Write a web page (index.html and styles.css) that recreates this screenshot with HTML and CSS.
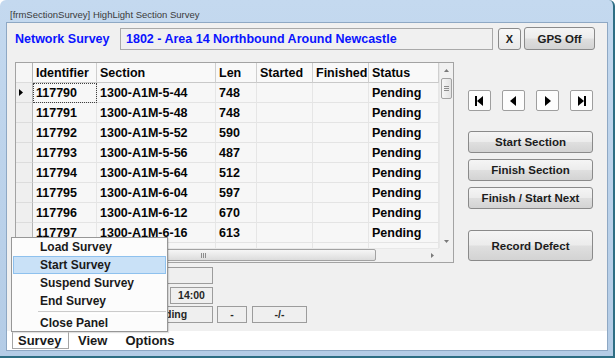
FILE: index.html
```html
<html lang="en">
  <head>
    <meta charset="UTF-8" />
    <title>HighLight Section Survey</title>
    <link rel="stylesheet" href="styles.css">
  </head>
  <body>
    <div class="window">
      <div class="titlebar">[frmSectionSurvey] HighLight Section Survey</div>
      <div class="client">
        <div class="top-row">
          <div class="net-label">Network Survey</div>
          <div class="net-box">1802 - Area 14 Northbound Around Newcastle</div>
          <button class="btn x-btn">X</button>
          <button class="btn gps-btn">GPS Off</button>
        </div>

        <div class="main">
          <div class="grid">
            <div class="grid-view">
              <div class="cells">
                <div class="hd rh"></div>
                <div class="hd">Identifier</div>
                <div class="hd">Section</div>
                <div class="hd">Len</div>
                <div class="hd">Started</div>
                <div class="hd">Finished</div>
                <div class="hd">Status</div>

                <div class="rh"><svg width="4" height="7" viewBox="0 0 4 7"><polygon points="0,0 4,3.5 0,7" fill="#000"/></svg></div>
                <div class="c focus">117790</div><div class="c">1300-A1M-5-44</div><div class="c">748</div><div class="c"></div><div class="c"></div><div class="c">Pending</div>
                <div class="rh"></div>
                <div class="c">117791</div><div class="c">1300-A1M-5-48</div><div class="c">748</div><div class="c"></div><div class="c"></div><div class="c">Pending</div>
                <div class="rh"></div>
                <div class="c">117792</div><div class="c">1300-A1M-5-52</div><div class="c">590</div><div class="c"></div><div class="c"></div><div class="c">Pending</div>
                <div class="rh"></div>
                <div class="c">117793</div><div class="c">1300-A1M-5-56</div><div class="c">487</div><div class="c"></div><div class="c"></div><div class="c">Pending</div>
                <div class="rh"></div>
                <div class="c">117794</div><div class="c">1300-A1M-5-64</div><div class="c">512</div><div class="c"></div><div class="c"></div><div class="c">Pending</div>
                <div class="rh"></div>
                <div class="c">117795</div><div class="c">1300-A1M-6-04</div><div class="c">597</div><div class="c"></div><div class="c"></div><div class="c">Pending</div>
                <div class="rh"></div>
                <div class="c">117796</div><div class="c">1300-A1M-6-12</div><div class="c">670</div><div class="c"></div><div class="c"></div><div class="c">Pending</div>
                <div class="rh"></div>
                <div class="c">117797</div><div class="c">1300-A1M-6-16</div><div class="c">613</div><div class="c"></div><div class="c"></div><div class="c">Pending</div>
                <div class="rh"></div>
                <div class="c"></div><div class="c"></div><div class="c"></div><div class="c"></div><div class="c"></div><div class="c"></div>
              </div>
              <div class="vscroll">
                <div class="arrow"><svg width="5" height="3" viewBox="0 0 5 3"><polygon points="0,3 2.5,0 5,3" fill="#7a7a7a"/></svg></div>
                <div class="vthumb"><span></span><span></span><span></span></div>
                <div class="vtrack"></div>
                <div class="arrow"><svg width="5" height="3" viewBox="0 0 5 3"><polygon points="0,0 2.5,3 5,0" fill="#7a7a7a"/></svg></div>
              </div>
            </div>
            <div class="grid-foot">
              <div class="hscroll">
                <div class="harrow"><svg width="3" height="5" viewBox="0 0 3 5"><polygon points="3,0 0,2.5 3,5" fill="#7a7a7a"/></svg></div>
                <div class="hthumb"><span></span><span></span><span></span></div>
                <div class="htrack"></div>
                <div class="harrow"><svg width="3" height="5" viewBox="0 0 3 5"><polygon points="0,0 3,2.5 0,5" fill="#7a7a7a"/></svg></div>
              </div>
              <div class="corner"></div>
            </div>
          </div>

          <div class="side">
            <div class="nav">
              <button class="nav-btn"><svg width="9" height="10" viewBox="0 0 9 10"><rect x="0" y="0" width="2" height="10" fill="#000"/><polygon points="8,0 2,5 8,10" fill="#000"/></svg></button>
              <button class="nav-btn"><svg width="9" height="10" viewBox="0 0 9 10"><polygon points="7,0 1,5 7,10" fill="#000"/></svg></button>
              <button class="nav-btn"><svg width="9" height="10" viewBox="0 0 9 10"><polygon points="2,0 8,5 2,10" fill="#000"/></svg></button>
              <button class="nav-btn"><svg width="9" height="10" viewBox="0 0 9 10"><polygon points="1,0 7,5 1,10" fill="#000"/><rect x="7" y="0" width="2" height="10" fill="#000"/></svg></button>
            </div>
            <button class="btn side-btn first">Start Section</button>
            <button class="btn side-btn">Finish Section</button>
            <button class="btn side-btn">Finish / Start Next</button>
            <button class="btn side-btn defect">Record Defect</button>
          </div>
        </div>

        <div class="info">
          <div class="info-row">
            <div class="box w93"></div>
          </div>
          <div class="info-row r2">
            <div class="box w47"></div>
            <div class="box w43 ml3">14:00</div>
          </div>
          <div class="info-row r3">
            <div class="box w93">Pending</div>
            <div class="box w30 ml4">-</div>
            <div class="box w55 ml5">-/-</div>
          </div>
        </div>

        <div class="menubar">
          <div class="menu-item open">Survey</div>
          <div class="menu-item">View</div>
          <div class="menu-item">Options</div>
        </div>
      </div>

      <div class="dropdown">
        <div class="dd-item">Load Survey</div>
        <div class="dd-item active">Start Survey</div>
        <div class="dd-item">Suspend Survey</div>
        <div class="dd-item">End Survey</div>
        <div class="dd-sep"></div>
        <div class="dd-item last">Close Panel</div>
      </div>
    </div>
  </body>
</html>
```

FILE: styles.css
```css
* {
  box-sizing: border-box;
}

body {
  margin: 0;
  background: #ffffff;
  font-family: "Liberation Sans", Arial, sans-serif;
}

.window {
  position: relative;
  width: 615px;
  height: 358px;
  display: flex;
  flex-direction: column;
  padding: 0 5px 5px 6px;
  background: linear-gradient(#c4d9ef, #b4cce6);
  border-right: 2px solid #2e6e84;
  border-bottom: 2px solid #2e6e84;
  border-radius: 6px 6px 0 0;
}

.titlebar {
  height: 22px;
  padding: 8px 0 0 4px;
  line-height: 14px;
  font-size: 9.5px;
  color: #3a3a3a;
  white-space: nowrap;
}

.client {
  flex: 1;
  display: flex;
  flex-direction: column;
  background: #f0f0f0;
  border: 1px solid #8ea8c4;
}

/* top row */
.top-row {
  display: flex;
  align-items: center;
  height: 23px;
  margin-top: 4px;
  padding-left: 8px;
}

.net-label {
  width: 105px;
  font-size: 12.5px;
  font-weight: bold;
  color: #0a14ff;
}

.net-box {
  width: 373px;
  height: 22px;
  margin-top: 1px;
  padding-left: 5px;
  line-height: 20px;
  font-size: 12.5px;
  font-weight: bold;
  color: #0a14ff;
  border: 1px solid #a9a9a9;
  background: #f0f0f0;
  white-space: nowrap;
}

.btn {
  padding: 0;
  font-family: "Liberation Sans", Arial, sans-serif;
  font-size: 11.5px;
  font-weight: bold;
  color: #1c1c1c;
  border: 1px solid #8a8a8a;
  border-radius: 3px;
  background: linear-gradient(#f5f5f5 0%, #ececec 48%, #dfdfdf 52%, #d3d3d3 100%);
}

.x-btn {
  width: 23px;
  height: 22px;
  margin-left: 5px;
  margin-top: 1px;
  font-size: 11px;
  background: linear-gradient(#f8f8f8, #e9e9e9);
}

.gps-btn {
  width: 71px;
  height: 23px;
  margin-left: 3px;
}

/* grid */
.main {
  display: flex;
  margin-top: 12px;
  padding-left: 8px;
}

.grid {
  width: 439px;
  height: 201px;
  border: 1px solid #a3a3a3;
  background: #f7f7f7;
}

.grid-view {
  display: flex;
  height: 185px;
}

.cells {
  width: 423px;
  height: 185px;
  overflow: hidden;
  display: grid;
  grid-template-columns: 17px 64px 119px 41px 56px 56px 70px;
  grid-auto-rows: 20px;
  align-content: start;
}

.hd,
.c,
.rh {
  padding: 1px 0 0 3px;
  line-height: 19px;
  font-size: 12.5px;
  font-weight: bold;
  color: #050505;
  white-space: nowrap;
  overflow: hidden;
}

.hd {
  background: #f9f9f9;
  border-right: 1px solid #cfcfcf;
  border-bottom: 1px solid #c9c9c9;
}

.c {
  border-right: 1px solid #e6e6e6;
  border-bottom: 1px solid #e4e4e4;
}

.rh {
  display: flex;
  align-items: center;
  padding: 0 0 0 3px;
  background: #efefef;
  border-right: 1px solid #b4b4b4;
  border-bottom: 1px solid #dcdcdc;
}

.hd.rh {
  background: #f6f6f6;
}

.c.focus {
  outline: 1px dotted #404040;
  outline-offset: -1px;
}

.vscroll {
  width: 14px;
  display: flex;
  flex-direction: column;
  background: #f1f1f1;
  border-left: 1px solid #e8e8e8;
}

.arrow {
  height: 14px;
  display: flex;
  align-items: center;
  justify-content: center;
}

.vthumb {
  height: 21px;
  margin: 1px 1px 0 1px;
  display: flex;
  flex-direction: column;
  align-items: center;
  justify-content: center;
  gap: 1px;
  border: 1px solid #a2a2a2;
  border-radius: 2px;
  background: linear-gradient(90deg, #f6f6f6, #e2e2e2);
}

.vthumb span {
  width: 5px;
  height: 1px;
  background: #8c8c8c;
}

.vtrack {
  flex: 1;
}

.grid-foot {
  display: flex;
  height: 14px;
}

.hscroll {
  width: 423px;
  display: flex;
  background: #f1f1f1;
  border-top: 1px solid #e8e8e8;
}

.harrow {
  width: 14px;
  display: flex;
  align-items: center;
  justify-content: center;
}

.hthumb {
  width: 345px;
  margin: 0 1px 1px 1px;
  display: flex;
  align-items: center;
  justify-content: center;
  gap: 1px;
  border: 1px solid #a2a2a2;
  border-radius: 2px;
  background: linear-gradient(#f6f6f6, #dcdcdc);
}

.hthumb span {
  width: 1px;
  height: 5px;
  background: #8c8c8c;
}

.htrack {
  flex: 1;
}

.corner {
  width: 14px;
  background: #f0f0f0;
}

/* right side */
.side {
  display: flex;
  flex-direction: column;
  margin-left: 14px;
  padding-top: 28px;
}

.nav {
  display: flex;
  gap: 11px;
}

.nav-btn {
  width: 23px;
  height: 21px;
  padding: 0;
  display: flex;
  align-items: center;
  justify-content: center;
  border: 1px solid #9e9e9e;
  border-radius: 2px;
  background: #fdfdfd;
}

.side-btn {
  width: 125px;
  height: 22px;
  margin-top: 6px;
}

.side-btn.first {
  margin-top: 20px;
}

.side-btn.defect {
  height: 31px;
  margin-top: 21px;
}

/* info boxes under the grid */
.info {
  padding-left: 113px;
  margin-top: 4px;
}

.info-row {
  display: flex;
  height: 17px;
}

.info-row.r2 {
  margin-top: 3px;
}

.info-row.r3 {
  margin-top: 2px;
}

.box {
  height: 17px;
  line-height: 15px;
  text-align: center;
  font-size: 10.5px;
  font-weight: bold;
  color: #262626;
  border: 1px solid #9c9c9c;
  background: #efefef;
}

.w93 { width: 93px; }
.w47 { width: 47px; }
.w43 { width: 43px; }
.w30 { width: 30px; }
.w55 { width: 55px; }
.ml3 { margin-left: 3px; }
.ml4 { margin-left: 4px; }
.ml5 { margin-left: 5px; }

/* menu strip */
.menubar {
  display: flex;
  height: 19px;
  margin-top: auto;
  padding-left: 5px;
  background: #ffffff;
}

.menu-item {
  height: 17px;
  margin-top: 1px;
  padding: 0 8px;
  line-height: 16px;
  font-size: 13px;
  font-weight: bold;
  color: #1a1a1a;
  border: 1px solid transparent;
}

.menu-item.open {
  width: 57px;
  padding-left: 5px;
  border-color: #a5a5a5;
  border-top-color: #ffffff;
}

.dropdown {
  position: absolute;
  top: 237px;
  left: 11px;
  width: 157px;
  height: 95px;
  border: 1px solid #979797;
  background: #fcfcfc;
  box-shadow: 1px 1px 1px rgba(0, 0, 0, 0.12);
}

.dd-item {
  height: 18px;
  margin: 0 1px;
  padding-left: 26px;
  line-height: 16px;
  font-size: 12px;
  font-weight: bold;
  color: #1a1a1a;
  border: 1px solid transparent;
}

.dd-item.active {
  background: #c9e1f7;
  border-color: #8ec1ee;
}

.dd-item.last {
  height: 17px;
}

.dd-sep {
  margin: 1px 1px 0 26px;
  height: 3px;
  border-top: 1px solid #cbcbcb;
  border-bottom: 1px solid #ffffff;
}
```
